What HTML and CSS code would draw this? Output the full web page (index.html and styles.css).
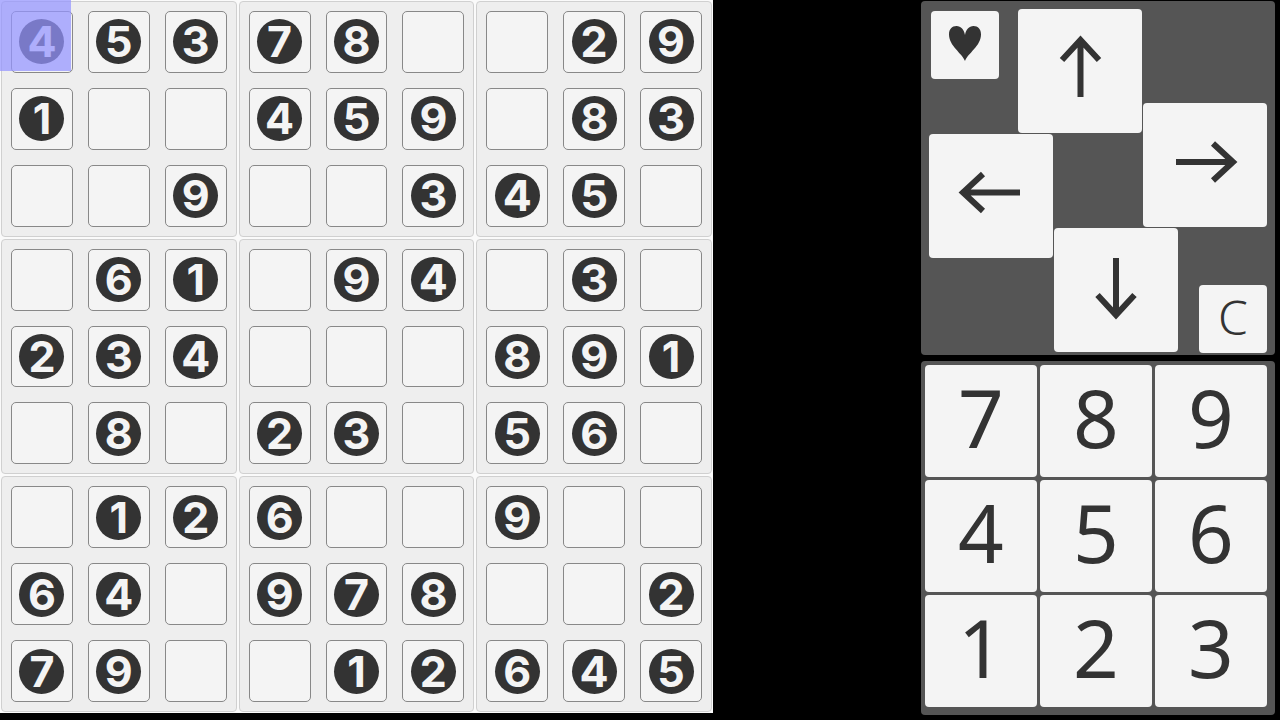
FILE: index.html
```
<!DOCTYPE html>
<html lang="en">
<head>
	<meta charset="utf-8"/>
	<title>Sudoku</title>
	<link rel="stylesheet" href="styles.css">
</head>
<body>

	<div id="main">
		<div id="board"></div>

		<div id="side">
			<div class="panel" id="pad">
				<button class="key heart" aria-label="Favourite">
					<svg viewBox="0 0 68 68"><path d="M34 50C31 42 18 35 18 23.500C18 18 21 15 25.500 15C30 15 33 18.500 34 24C35 18.500 38 15 42.500 15C47 15 50 18 50 23.500C50 35 37 42 34 50Z"/></svg>
				</button>
				<button class="key up" aria-label="Up">
					<svg class="arrow" viewBox="0 0 124 124"><path d="M62.500 88V31M44 51L62.500 31L81 51"/></svg>
				</button>
				<button class="key left" aria-label="Left">
					<svg class="arrow" viewBox="0 0 124 124"><path d="M91 58.500H34M54 40L34 58.500L54 77"/></svg>
				</button>
				<button class="key right" aria-label="Right">
					<svg class="arrow" viewBox="0 0 124 124"><path d="M33 59H90M70 40.500L90 59L70 77.500"/></svg>
				</button>
				<button class="key down" aria-label="Down">
					<svg class="arrow" viewBox="0 0 124 124"><path d="M62 30V87M43.500 67L62 87L80.500 67"/></svg>
				</button>
				<button class="key clear">C</button>
			</div>

			<div class="panel" id="numbers">
				<button class="key">7</button>
				<button class="key">8</button>
				<button class="key">9</button>
				<button class="key">4</button>
				<button class="key">5</button>
				<button class="key">6</button>
				<button class="key">1</button>
				<button class="key">2</button>
				<button class="key">3</button>
			</div>
		</div>
	</div>

	<script type="text/javascript">

		var board = document.getElementById('board');

		// 0 = empty cell
		var rows = [
			'453780029',
			'100459083',
			'009003450',
			'061094030',
			'234000891',
			'080230560',
			'012600900',
			'640978002',
			'790012645'
		];

		for( var b=0; b<9; b++ ){

			var box = document.createElement('div');
			box.className = 'box';

			for( var i=0; i<9; i++ ){

				var y = Math.floor(b/3)*3 + Math.floor(i/3);
				var x = (b%3)*3 + i%3;
				var cell = document.createElement('div');
				cell.className = 'cell';

				if( rows[y][x] != '0' ){
					cell.innerHTML = '<span class="given">'+rows[y][x]+'</span>';
				}
				box.appendChild(cell);
			}
			board.appendChild(box);
		}

		var cursor = document.createElement('div');
		cursor.id = 'cursor';
		board.appendChild(cursor);

	</script>

</body>
</html>
```
FILE: styles.css
```
*{
	margin:0;padding:0;
	box-sizing:border-box;
}
body{
	background:#000;
	color:#333;
}
#main{
	display:flex;
	justify-content:space-between;
	align-items:flex-start;
	height:100vh;
}

/* board */
#board{
	position:relative;
	display:grid;
	grid-template-columns:repeat(3,1fr);
	grid-template-rows:repeat(3,1fr);
	gap:2px;
	padding:1px;
	height:calc(100vh - 7px);
	aspect-ratio:1;
	background:#fafafa;
}
.box{
	display:grid;
	grid-template-columns:repeat(3,1fr);
	grid-template-rows:repeat(3,1fr);
	gap:15px;
	padding:9px;
	border:1px solid #d0d0d0;
	border-radius:4px;
	background:#eee;
}
.cell{
	display:flex;
	align-items:center;
	justify-content:center;
	min-width:0;
	min-height:0;
	border:1px solid #888;
	border-radius:5px;
	background:#f4f4f4;
}
.given{
	width:45px;
	height:45px;
	border-radius:50%;
	background:#333;
	color:#f4f4f4;
	font:bold 43px/45px Inter,sans-serif;
	text-align:center;
}
#cursor{
	position:absolute;
	left:0;
	top:0;
	width:10%;
	height:10%;
	background:rgba(148,148,255,0.73);
}

/* right side */
#side{
	display:grid;
	grid-template-rows:1fr 1fr;
	gap:6px;
	width:calc(50vh - 1px);
	height:100vh;
	padding:1px 5px 5px 0;
}
.panel{
	display:grid;
	min-height:0;
	border-radius:4px;
	background:#555;
}
.key{
	display:flex;
	align-items:center;
	justify-content:center;
	min-width:0;
	min-height:0;
	border:none;
	border-radius:4px;
	background:#f4f4f4;
	color:#333;
	font-family:"Noto Sans",sans-serif;
	cursor:pointer;
}
.key svg{
	width:100%;
	height:100%;
	fill:#333;
}
.key .arrow{
	fill:none;
	stroke:#333;
	stroke-width:6;
}

#pad{
	grid-template-columns:89fr 36fr 89fr 36fr 20fr 69fr;
	grid-template-rows:94fr 31fr 94fr 31fr 26fr 68fr;
	padding:8px 7px 2px 8px;
}
#pad .key{
	margin:0 1px 1px 0;
}
#pad .heart{
	grid-area:1/1;
	width:68px;
	height:68px;
	margin:2px;
}
#pad .up{
	grid-area:1/2/3/4;
}
#pad .left{
	grid-area:3/1/5/3;
}
#pad .right{
	grid-area:2/4/4/7;
}
#pad .down{
	grid-area:4/3/7/5;
}
#pad .clear{
	grid-area:6/6;
	margin-bottom:0;
	padding-bottom:4px;
	font-size:48px;
	font-weight:300;
	line-height:64px;
}

#numbers{
	grid-template-columns:repeat(3,1fr);
	grid-template-rows:repeat(3,1fr);
	gap:3px;
	padding:4px 8px 8px 4px;
}
#numbers .key{
	padding-bottom:8px;
	font-size:80px;
	line-height:104px;
}
```
